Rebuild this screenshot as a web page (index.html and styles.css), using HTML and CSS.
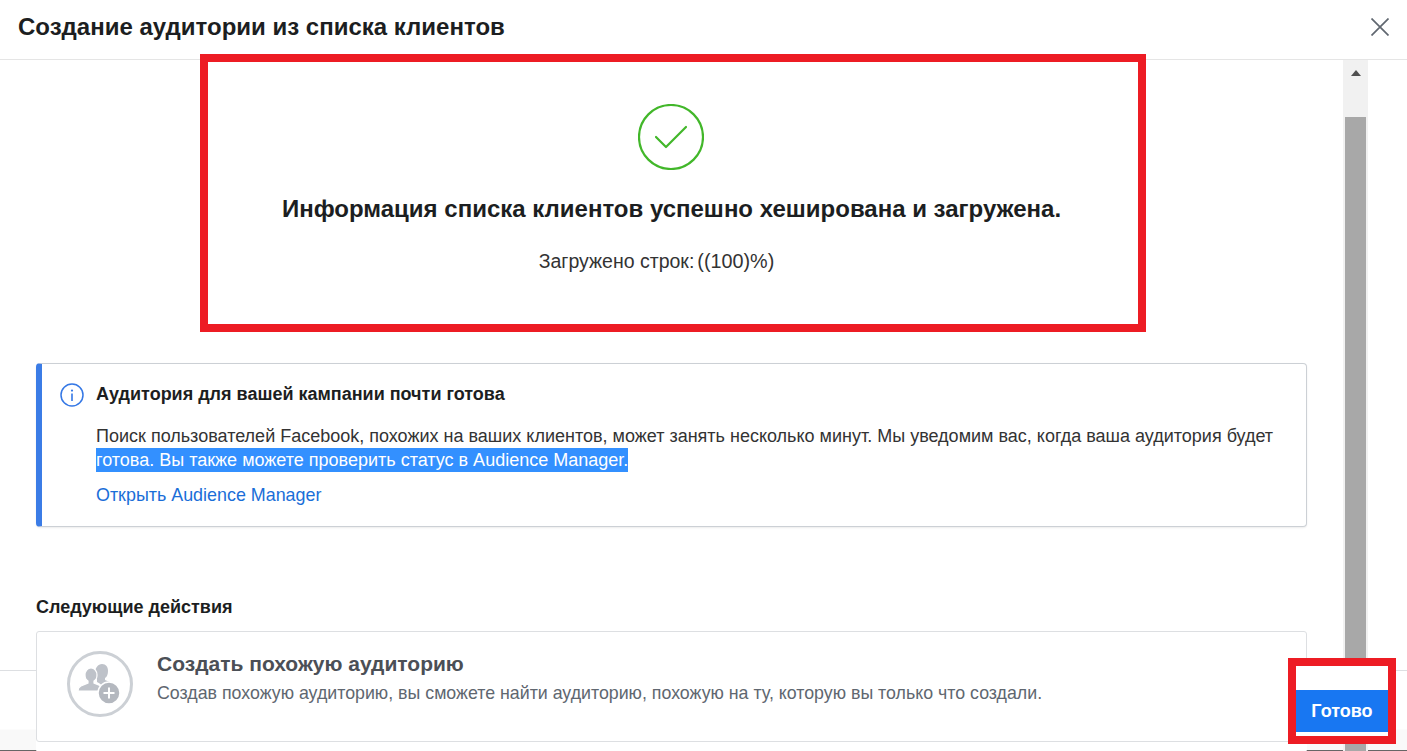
FILE: index.html
```html
<!DOCTYPE html>
<html lang="ru">
<head>
<meta charset="utf-8">
<title>Создание аудитории из списка клиентов</title>
<link rel="stylesheet" href="styles.css">
</head>
<body>
<div class="dialog">
  <div class="footer-back"></div>
  <header class="header">
    <h1 class="header-title">Создание аудитории из списка клиентов</h1>
    <button class="close" aria-label="Закрыть">
      <svg width="18" height="18" viewBox="0 0 18 18"><path d="M.5.5l17 17M17.5.5l-17 17" fill="none" stroke="#606770" stroke-width="1.7"/></svg>
    </button>
  </header>
  <div class="body">
    <main class="content">
      <section class="success">
        <svg class="success-icon" width="66" height="66" viewBox="0 0 66 66"><circle cx="33" cy="33" r="32" fill="none" stroke="#42b72a" stroke-width="2.2"/><path d="M18 33l10 10 20-20" fill="none" stroke="#42b72a" stroke-width="2.2" stroke-linecap="round" stroke-linejoin="round"/></svg>
        <h2 class="success-title">Информация списка клиентов успешно хеширована и загружена.</h2>
        <p class="success-rows"><span>Загружено строк:</span><span class="success-count">((100)%)</span></p>
      </section>
      <section class="notice">
        <svg class="notice-icon" width="24" height="24" viewBox="0 0 24 24"><circle cx="12" cy="12" r="11" fill="none" stroke="#3578e5" stroke-width="1.5"/><rect x="11.2" y="10.5" width="1.6" height="7.5" fill="#3578e5"/><circle cx="12" cy="7.6" r="1.1" fill="#3578e5"/></svg>
        <div class="notice-main">
          <h3 class="notice-title">Аудитория для вашей кампании почти готова</h3>
          <p class="notice-text">Поиск пользователей Facebook, похожих на ваших клиентов, может занять несколько минут. Мы уведомим вас, когда ваша аудитория будет <span class="selected">готова. Вы также можете проверить статус в Audience Manager.</span></p>
          <a class="notice-link" href="#">Открыть Audience Manager</a>
        </div>
      </section>
      <h3 class="next-label">Следующие действия</h3>
      <section class="action">
        <svg class="action-icon" width="68" height="68" viewBox="0 0 68 68">
          <circle cx="34" cy="34" r="31.5" fill="none" stroke="#ccd0d5" stroke-width="3"/>
          <path d="M36 14c4 0 6 3 6 7 0 3-1 6-3 7v2l7 3c2 1 3 2 3 4l-2 3H37c0-4-2-6-6-8v-3c-1-1-2-4-2-6 0-5 3-9 7-9z" fill="#bec2c9"/>
          <path d="M25 18c3.5 0 6 3 6 7 0 3-1 5-3 6v2l7 3c2 1 3 2.5 3 5H12c0-2.5 1-4 3-5l7-3v-2c-2-1-3-3-3-6 0-4 2.5-7 6-7z" fill="#bec2c9" stroke="#fff" stroke-width="1.2"/>
          <circle cx="43" cy="43" r="11" fill="#b4b8bf" stroke="#fff" stroke-width="1.5"/>
          <path d="M43 37.5v11M37.5 43h11" stroke="#fff" stroke-width="2"/>
        </svg>
        <div class="action-main">
          <h4 class="action-title">Создать похожую аудиторию</h4>
          <p class="action-text">Создав похожую аудиторию, вы сможете найти аудиторию, похожую на ту, которую вы только что создали.</p>
        </div>
      </section>
    </main>
    <div class="scrollbar">
      <div class="scroll-head"><span class="scroll-arrow"></span></div>
      <div class="scroll-thumb"></div>
    </div>
  </div>
  <button class="done">Готово</button>
  <div class="mark mark-status"></div>
  <div class="mark mark-done"></div>
</div>
</body>
</html>
```
FILE: styles.css
```css
* { box-sizing: border-box; }
html, body { margin: 0; height: 100%; overflow: hidden; background: #fff; }
body { font-family: "Liberation Sans", Arial, sans-serif; color: #1c1e21; }
h1, h2, h3, h4, p { margin: 0; }

.dialog { position: relative; width: 1407px; height: 751px; display: flex; flex-direction: column; overflow: hidden; }

.footer-back { position: absolute; left: 0; right: 0; top: 670px; height: 81px; border-top: 1px solid #dddfe2; border-bottom: 1px solid #666; background: linear-gradient(#fff 73%, #f9f9f9 75%); }

.header { position: relative; flex: none; height: 60px; border-bottom: 1px solid #e5e5e5; padding: 0 18px; display: flex; align-items: center; justify-content: space-between; background: #fff; }
.header-title { font-size: 24px; line-height: 28px; font-weight: 700; margin-top: -5px; }
.close { border: 0; padding: 0; background: none; display: flex; margin: -5px 0 0; }

.body { position: relative; flex: 1; min-height: 0; display: flex; }
.content { flex: none; width: 1343px; padding: 0 36px; overflow: hidden; }

.success { display: flex; flex-direction: column; align-items: center; padding-top: 44px; }
.success-icon { display: block; margin-right: 2px; }
.success-title { margin-top: 25px; font-size: 24px; line-height: 28px; font-weight: 700; }
.success-rows { margin-top: 26px; margin-right: 30px; font-size: 19.5px; line-height: 24px; color: #333; display: flex; gap: 3px; }
.success-count { font-size: 19.8px; }

.notice { margin-top: 90px; height: 164px; background: #fff; border: 1px solid #ccd0d5; border-left: 6px solid #3b7ce6; border-radius: 4px; box-shadow: 0 1px 2px rgba(0,0,0,.08); display: flex; padding: 18px 12px 0 18px; gap: 12px; }
.notice-icon { flex: none; margin-top: 1px; }
.notice-main { flex: 1; min-width: 0; }
.notice-title { font-size: 18px; line-height: 24px; font-weight: 700; }
.notice-text { margin-top: 18px; font-size: 18px; line-height: 24px; color: #333; }
.selected { display: inline-block; background: #3390ff; color: #fff; }
.notice-link { display: block; margin-top: 11px; font-size: 17.9px; line-height: 24px; color: #1a6ed8; text-decoration: none; }

.next-label { margin-top: 70px; font-size: 18px; line-height: 20px; font-weight: 700; }
.action { margin-top: 14px; height: 111px; background: #fff; border: 1px solid #dddfe2; border-radius: 3px; box-shadow: 0 10px 0 #fff; display: flex; padding: 18px 20px 0 29px; gap: 23px; }
.action-icon { flex: none; }
.action-title { font-size: 21px; line-height: 28px; font-weight: 700; color: #4b4f56; }
.action-text { margin-top: 5px; font-size: 17.8px; line-height: 20px; color: #606770; }

.scrollbar { flex: none; width: 25px; background: #f1f1f1; padding: 0 2px; display: flex; flex-direction: column; }
.scroll-head { height: 57px; display: flex; justify-content: center; padding-top: 10px; }
.scroll-arrow { width: 0; height: 0; border-left: 5.5px solid transparent; border-right: 5.5px solid transparent; border-bottom: 6px solid #505050; }
.scroll-thumb { flex: 1; background: #a8a8a8; }

.done { position: absolute; left: 1296px; top: 690px; width: 92px; height: 42px; border: 0; padding: 0; background: #1877f2; color: #fff; font: 700 18px "Liberation Sans", Arial, sans-serif; }
.mark { position: absolute; border: 8px solid #ed1c24; pointer-events: none; }
.mark-status { left: 200px; top: 54px; width: 946px; height: 278px; }
.mark-done { left: 1288px; top: 658px; width: 108px; height: 86px; background: linear-gradient(#fff, #fff) top / 100% 24px no-repeat, linear-gradient(#fff, #fff) bottom / 100% 4px no-repeat; }
```
